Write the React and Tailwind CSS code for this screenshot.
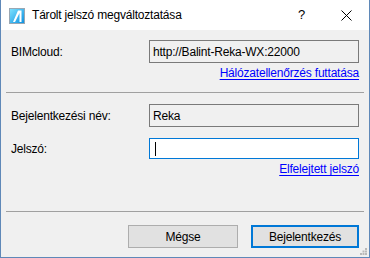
import React from "react";

function AppIcon() {
  return (
    <svg width="16" height="16" viewBox="0 0 16 16">
      <defs>
        <linearGradient id="ai" x1="0" y1="0" x2="1" y2="1">
          <stop offset="0" stopColor="#7fe3ff" />
          <stop offset="1" stopColor="#0a8fe0" />
        </linearGradient>
      </defs>
      <rect x="0.5" y="0.5" width="15" height="15" fill="url(#ai)" stroke="#9aa7b3" />
      <path d="M4 14 L9 2.5 L12.5 2.5 L12.5 14 L10.5 14 L10.5 5 L6 14 Z" fill="#ffffff" />
    </svg>
  );
}

function Grip() {
  return (
    <svg width="7" height="7" viewBox="0 0 7 7" className="absolute right-[2px] bottom-[2px]">
      <rect x="5" y="0" width="2" height="2" fill="#b9b9b9" />
      <rect x="2.5" y="2.5" width="2" height="2" fill="#b9b9b9" />
      <rect x="5" y="2.5" width="2" height="2" fill="#b9b9b9" />
      <rect x="0" y="5" width="2" height="2" fill="#b9b9b9" />
      <rect x="2.5" y="5" width="2" height="2" fill="#b9b9b9" />
      <rect x="5" y="5" width="2" height="2" fill="#b9b9b9" />
    </svg>
  );
}

export default function App() {
  return (
    <div className="w-[370px] h-[258px] flex flex-col border-x border-b border-[#5f88b8] bg-[#f0f0f0] text-[12px] tracking-[-0.2px] text-black font-['Liberation_Sans',Arial,sans-serif] relative overflow-hidden">
      {/* title bar */}
      <div className="h-[30px] bg-white flex items-center shrink-0">
        <div className="ml-[8px] mt-[1px]">
          <AppIcon />
        </div>
        <span className="ml-[7px] text-[12px]">Tárolt jelszó megváltoztatása</span>
        <span className="ml-auto mr-[36px] text-[13px]">?</span>
        <svg width="11" height="11" viewBox="0 0 11 11" className="mr-[17px]">
          <path d="M0.5 0.5 L10.5 10.5 M10.5 0.5 L0.5 10.5" stroke="#000" strokeWidth="1" />
        </svg>
      </div>

      <div className="flex flex-col pl-[10px] pr-[10px] pt-[10px]">
        <div className="flex items-center h-[23px]">
          <span className="w-[138px]">BIMcloud:</span>
          <div className="flex-1 h-[23px] border border-[#7a7a7a] bg-[#f0f0f0] flex items-center pl-[3px]">
            http://Balint-Reka-WX:22000
          </div>
        </div>
        <div className="flex justify-end h-[18px] items-center mt-[1px]">
          <a className="text-[#0000ff] underline underline-offset-2">Hálózatellenőrzés futtatása</a>
        </div>
      </div>

      <div className="mx-[5px] mt-[10px] h-px bg-[#a0a0a0]" />

      <div className="flex flex-col pl-[10px] pr-[10px] pt-[11px]">
        <div className="flex items-center h-[23px]">
          <span className="w-[138px]">Bejelentkezési név:</span>
          <div className="flex-1 h-[23px] border border-[#7a7a7a] bg-[#f0f0f0] flex items-center pl-[3px]">
            Reka
          </div>
        </div>
        <div className="flex items-center h-[21px] mt-[11px]">
          <span className="w-[138px]">Jelszó:</span>
          <div className="flex-1 h-[21px] border border-[#0078d7] bg-white flex items-center pl-[5px]">
            <div className="w-px h-[14px] bg-black" />
          </div>
        </div>
        <div className="flex justify-end h-[18px] items-center mt-[1px]">
          <a className="text-[#0000ff] underline underline-offset-2">Elfelejtett jelszó</a>
        </div>
      </div>

      <div className="mx-[5px] mt-[33px] h-px bg-[#a0a0a0]" />

      <div className="flex justify-end gap-[13px] pr-[10px] mt-[13px]">
        <button className="w-[110px] h-[23px] bg-[#e1e1e1] border border-[#adadad] flex items-center justify-center">
          Mégse
        </button>
        <button className="w-[108px] h-[23px] bg-[#e1e1e1] border-2 border-[#0078d7] flex items-center justify-center">
          Bejelentkezés
        </button>
      </div>

      <Grip />
    </div>
  );
}
